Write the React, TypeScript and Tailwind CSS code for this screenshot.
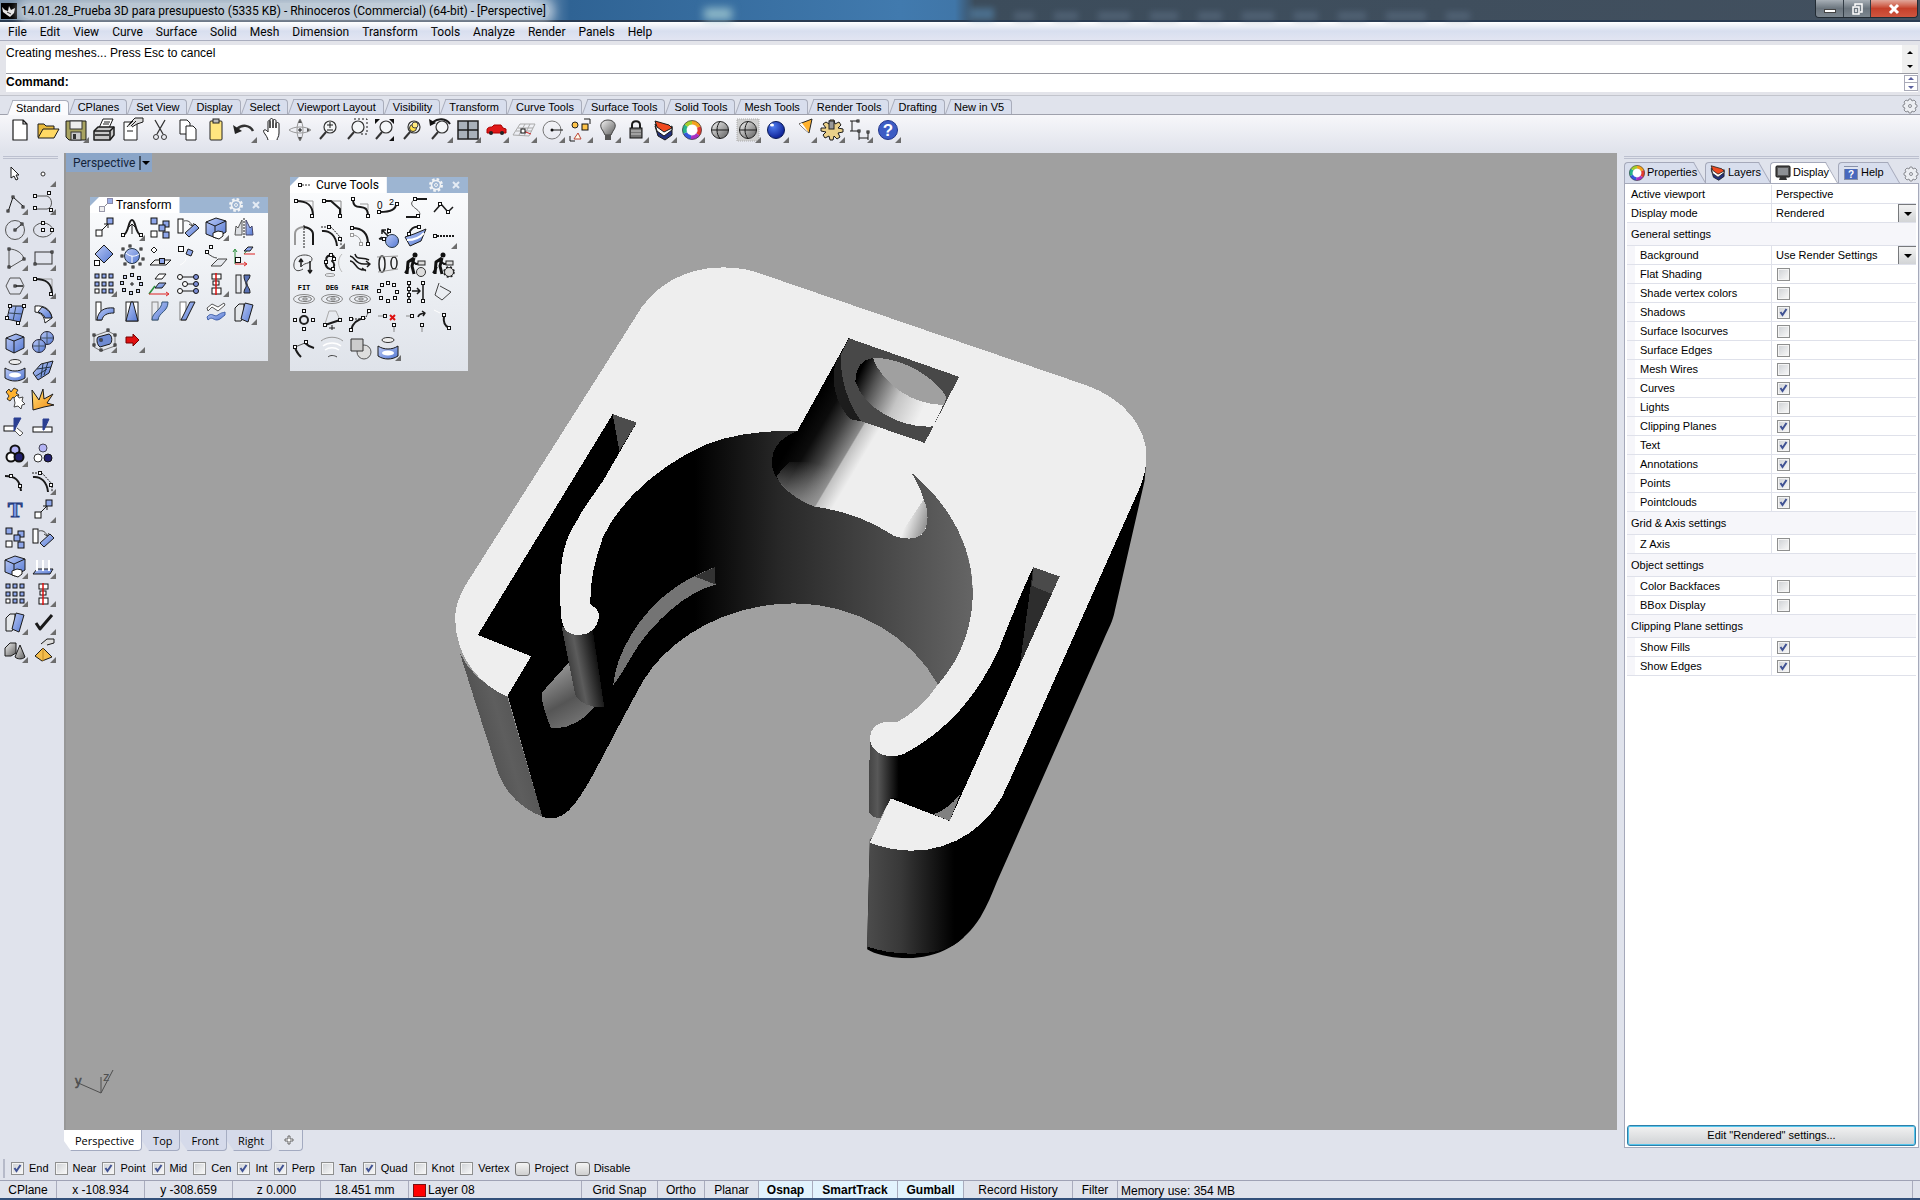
import type { ReactNode } from 'react';
import clsx from 'clsx';

/* ---------- small drawing helpers, all on a 28x28 cell ---------- */

type LineProps = { d: string; c?: string; w?: number; f?: string; dash?: string };

function Ln({ d, c = '#1a1a1a', w = 1, f = 'none', dash }: LineProps) {
  return <path d={d} stroke={c} strokeWidth={w} fill={f} strokeDasharray={dash} strokeLinejoin="round" />;
}

// square handles, "x,y x,y ..."
function Pts({ p, s = 3, f = '#fff', c = '#111' }: { p: string; s?: number; f?: string; c?: string }) {
  return (
    <>
      {p.split(' ').map((xy) => {
        const [x, y] = xy.split(',').map(Number);
        return <rect key={xy} x={x - s / 2} y={y - s / 2} width={s} height={s} fill={f} stroke={c} />;
      })}
    </>
  );
}

const BLUE = 'url(#blue)';

const spiral = (
  <>
    <ellipse cx="14" cy="21" rx="10.500" ry="4.500" fill="none" stroke="#888" />
    <ellipse cx="15" cy="21" rx="6.500" ry="2.500" fill="none" stroke="#777" />
    <ellipse cx="15" cy="21" rx="2.500" ry="1" fill="none" stroke="#777" />
  </>
);

const word = (t: string) => (
  <>
    <text x="14" y="12" textAnchor="middle" fontSize="7" fontWeight="700" fontFamily="Liberation Mono, monospace">{t}</text>
    {spiral}
  </>
);

const magnifier = (
  <>
    <circle cx="16" cy="11" r="6" fill="#f4f6f8" stroke="#333" strokeWidth="1.200" />
    <Ln d="M12 16 L6 23" c="#333" w={2} />
  </>
);

const gridSquares = (
  <>
    <Pts p="7,6 14,6 21,6 7,14 14,14 21,14 14,21 21,21" s={4} f="#8ea6ea" />
    <Pts p="7,21" s={4} />
  </>
);

const cyclist = (
  <>
    <circle cx="13" cy="5" r="2.500" fill="#111" />
    <Ln d="M12 8 L6 12 L5 24 M12 8 L10 16 L12 24" w={3} c="#111" />
    <Ln d="M9 10 L14 14 L20 13 M7 17 L3 23" w={2} c="#111" />
    <rect x="16" y="11" width="7" height="4" fill="#ddd" stroke="#222" />
    <circle cx="19" cy="22" r="4.500" fill="#ddd" stroke="#333" />
  </>
);

const globe = (
  <>
    <circle cx="14" cy="14" r="8.500" fill="url(#metal)" stroke="#222" />
    <Ln d="M5.500 14 H22.500 M14 5.500 C10 10 10 18 14 22.500" />
  </>
);

const icons: Record<string, ReactNode> = {
  /* standard bar */
  new: <Ln d="M7 4 H17 L21 8 V24 H7 Z M17 4 V8 H21" f="#fff" w={1.2} />,
  open: (
    <>
      <Ln d="M4 21 V8 H10 L12 10 H20 V13" f="#e8b93c" />
      <Ln d="M4 22 L9 13 H25 L20 22 Z" f="#ffd964" />
    </>
  ),
  save: (
    <>
      <Ln d="M4 5 H24 V24 H7 L4 21 Z" f="#a8a361" />
      <rect x="8" y="5" width="12" height="8" fill="#eee" stroke="#333" />
      <rect x="9" y="16" width="10" height="8" fill="#ccc" stroke="#333" />
      <rect x="11" y="18" width="3" height="5" fill="#333" />
    </>
  ),
  print: (
    <>
      <Ln d="M9 12 L13 3 H23 L19 12 Z" f="#fff" />
      <Ln d="M14 6 H20 M13 8 H19" />
      <Ln d="M4 15 L8 11 H24 V19 L20 24 H4 Z" f="#c6c6c6" w={1.5} />
      <Ln d="M4 15 H20 V24 M20 15 L24 11 M5 19 H19" w={1.5} />
    </>
  ),
  props: (
    <>
      <Ln d="M6 6 H19 V24 H6 Z" f="#fff" />
      <Ln d="M9 11 L13 6 L17 2 H25 V6 L19 8 L14 11" f="#ddd" />
      <Ln d="M11 9 L15 5 M13 10 L18 5 M9 15 H15" />
    </>
  ),
  cut: (
    <>
      <Ln d="M9 4 L17 18 M19 4 L11 18" c="#333" w={1.3} />
      <circle cx="10" cy="21" r="2.500" fill="none" stroke="#333" />
      <circle cx="18" cy="21" r="2.500" fill="none" stroke="#333" />
    </>
  ),
  copyDoc: (
    <>
      <Ln d="M6 4 H13 L16 7 V18 H6 Z" f="#fff" />
      <Ln d="M12 10 H19 L22 13 V24 H12 Z" f="#fff" />
    </>
  ),
  paste: (
    <>
      <rect x="8" y="5" width="12" height="19" rx="1" fill="#ffe680" stroke="#222" />
      <rect x="11" y="3" width="6" height="4" fill="#bbb" stroke="#222" />
    </>
  ),
  undo: (
    <>
      <Ln d="M7 13 C12 8 20 9 23 15" w={2.5} c="#333" />
      <path d="M3 9 L5 18 L12 15 Z" fill="#222" />
    </>
  ),
  hand: (
    <Ln
      d="M10 24 C9 19 4 16 6 14 C8 13 10 16 10 16 V6 C10 4 12 4 12 6 V12 V4 C12 2 15 2 15 4 V12 V5 C15 3 18 3 18 5 V12 V8 C18 6 21 6 21 8 V17 C21 21 19 22 19 24"
      f="#fff"
    />
  ),
  rotateView: (
    <>
      <Ln d="M14 3 C10 8 10 20 14 25 C18 20 18 8 14 3 M3 14 C8 10 20 10 25 14 C20 18 8 18 3 14" c="#999" />
      <path d="M14 3 l2 4 h-4 Z M14 25 l2 -4 h-4 Z M24 14 l-3 2 v-4 Z" fill="#555" />
      <Ln d="M14 12 V16 M12 14 H16" />
    </>
  ),
  zoomPM: <>{magnifier}<Ln d="M13 9 H19 M16 6 V12 M13 14 H19" /></>,
  zoomWin: <>{magnifier}<Ln d="M12 3 H25 V18 H18" dash="2 2" /></>,
  zoomExt: <>{magnifier}<path d="M5 3 h5 l-5 5 Z M24 3 v5 l-5 -5 Z M24 25 v-5 l-5 5 Z" fill="#111" /></>,
  zoomSel: (
    <>
      {magnifier}
      <circle cx="15" cy="12" r="3.500" fill="#ffe14a" stroke="#333" />
      <circle cx="17" cy="9" r="3" fill="#ffeb80" stroke="#444" />
    </>
  ),
  zoomUndo: <>{magnifier}<Ln d="M7 6 C12 2 20 2 24 8" w={2} /><path d="M3 3 l1 7 l6 -3 Z" fill="#111" /></>,
  fourView: (
    <>
      <rect x="4" y="5" width="20" height="18" fill="#a9b1ba" stroke="#222" strokeWidth="1.500" />
      <Ln d="M14 5 V23 M4 14 H24" w={1.5} />
    </>
  ),
  car: (
    <>
      <Ln d="M5 14 C5 11 9 11 10 11 L12 9 H19 L21 12 L24 13 V17 H5 Z" c="#a00" f="#e01818" />
      <circle cx="9" cy="17" r="2" fill="#222" />
      <circle cx="20" cy="17" r="2" fill="#222" />
    </>
  ),
  cplane: (
    <>
      <Ln d="M3 19 L10 8 H25 L19 20 Z M6 15 H22 M8 12 H23 M9 19 L15 8 M14 20 L20 8" c="#aaa" />
      <Ln d="M13 15 L21 18" c="#c22" />
      <Pts p="13,15" s={4} />
    </>
  ),
  setObj: (
    <>
      <circle cx="14" cy="14" r="9" fill="none" stroke="#777" />
      <Ln d="M14 14 H25" />
      <circle cx="14" cy="14" r="1.500" fill="#111" />
    </>
  ),
  select: (
    <>
      <Ln d="M18 3 H24 V8 M4 20 V25 H9" />
      <circle cx="9" cy="9" r="3" fill="#ffc44a" stroke="#222" />
      <Pts p="19,11" s={6} f="#ffc44a" />
      <Ln d="M12 17 L15 23 H8 Z" c="#b43" f="#ffe" />
    </>
  ),
  lamp: (
    <>
      <path d="M9 15 C4 9 8 4 14 4 C20 4 24 9 19 15 L17 19 H11 Z" fill="url(#metal)" stroke="#444" />
      <rect x="11" y="19" width="6" height="5" fill="#555" />
    </>
  ),
  lock: (
    <>
      <Ln d="M10 13 V9 C10 4 18 4 18 9 V13" w={2} />
      <rect x="8" y="12" width="12" height="10" fill="#777" stroke="#111" />
      <Ln d="M9 15 H19 M9 18 H19" c="#ccc" />
    </>
  ),
  layers: (
    <>
      <Ln d="M5 10 L14 16 L22 11 V19 L15 24 L8 20 Z" f="#24327e" />
      <Ln d="M5 8 L14 14 L22 10 V14 L14 20 L7 15 Z" f="#fff" />
      <Ln d="M5 5 L19 9 L22 12 L14 16 L7 11 Z" f="#f04a20" />
    </>
  ),
  wheel: <Wheel />,
  globe,
  globe2: (
    <>
      <rect x="3" y="3" width="22" height="22" fill="#cfcfcf" stroke="#aaa" strokeDasharray="1 1" />
      {globe}
    </>
  ),
  ball: (
    <>
      <circle cx="14" cy="14" r="8.500" fill="url(#ball)" stroke="#0a1a55" />
      <ellipse cx="10" cy="9" rx="2" ry="1.500" fill="#fff" />
    </>
  ),
  spot: <><path d="M9 8 L22 3 L19 17 Z" fill="#ffb22e" stroke="#222" /><path d="M9 8 L12 7 L19 17 Z" fill="#fff" /></>,
  gear: (
    <>
      <Ln d="M12 4 H16 L17 8 L21 6 L23 9 L20 12 L25 13 V16 L20 17 L22 21 L19 23 L16 20 L15 24 H12 L11 20 L7 22 L5 19 L8 16 L3 15 V12 L8 12 L5 8 L8 6 L11 8 Z" f="#ead089" />
      <rect x="11" y="5" width="5" height="8" fill="#999" stroke="#222" />
    </>
  ),
  dims: (
    <>
      <Ln d="M6 5 V15 M4 5 H11 M4 15 H13 M13 15 V24 M22 15 V24 M13 22 H22" />
      <Pts p="12,5 13,15 22,16" s={2} />
    </>
  ),
  help: (
    <>
      <circle cx="14" cy="14" r="9.500" fill="#3d5cc4" stroke="#23368c" />
      <text x="14" y="20" textAnchor="middle" fontSize="17" fontWeight="700" fill="#fff" fontFamily="Liberation Sans, sans-serif">?</text>
    </>
  ),

  /* modelling tools */
  pointer: <Ln d="M10 7 V18 L13 16 L15 20 L17 19 L15 15 H18 Z" f="#fff" />,
  point: <circle cx="14" cy="14" r="2" fill="#fff" stroke="#333" />,
  polyline: <><Ln d="M7 24 L12 9 L23 19" /><Pts p="7,23 12,9 22,19" s={2} /></>,
  curvePts: <><Ln d="M6 8 H18 C24 10 24 20 18 21 H6" c="#555" /><Pts p="6,8 20,5 6,20 22,22" /></>,
  circle: <><circle cx="14" cy="14" r="9.500" fill="none" stroke="#555" /><Ln d="M14 14 L21 8" /><Pts p="14,14 21,8" s={2} /></>,
  ellipse: <><ellipse cx="14" cy="14" rx="9.500" ry="7" fill="none" stroke="#555" /><Pts p="14,7 14,14 23,14" /></>,
  arc: <><Ln d="M8 5 C16 5 22 10 23 15 L8 24 Z" c="#555" /><Pts p="8,5 23,15 8,23" s={2} /></>,
  rect: <><rect x="6" y="8" width="17" height="12" fill="none" stroke="#333" /><Pts p="6,20 23,8" s={2} /></>,
  polygon: <><Ln d="M9 6 H19 L23 14 L19 22 H9 L5 14 Z" c="#555" /><Ln d="M14 14 H22" w={1.5} /><Pts p="14,14" s={2} /></>,
  fillet: <><Ln d="M6 7 H23 V22" c="#999" /><Ln d="M6 7 C16 7 23 10 23 22" w={2} /><Pts p="6,7 22,22" /></>,
  surface: <><Ln d="M9 6 L23 6 L19 22 L6 19 Z" f={BLUE} /><Ln d="M15 6 L12 21 M8 13 L21 14" c="#345" /><Pts p="9,6 23,6 6,18 17,23" /></>,
  sweep: <><Ln d="M6 6 C16 5 22 10 23 18 L16 23 C15 15 12 13 6 12 Z" f="#fff" /><Ln d="M13 7 C19 9 22 13 23 18 L16 18 C15 15 13 13 9 12 Z" f={BLUE} /></>,
  cube: <><Ln d="M5 10 L15 6 L23 9 V20 L13 25 L5 21 Z" f={BLUE} /><Ln d="M5 10 L13 13 L23 9 M13 13 V25" /></>,
  spheres: (
    <>
      <circle cx="18" cy="10" r="6.500" fill={BLUE} stroke="#223" />
      <circle cx="10" cy="18" r="6.500" fill={BLUE} stroke="#223" />
      <Ln d="M4 18 H16 M10 12 V24 M12 10 H24 M18 4 V16" c="#456" />
    </>
  ),
  project: (
    <>
      <ellipse cx="14" cy="6" rx="6" ry="2.500" fill="#eee" stroke="#333" />
      <Ln d="M4 12 C10 16 18 16 24 12 V22 C18 26 10 26 4 22 Z" f={BLUE} />
      <ellipse cx="14" cy="19" rx="6" ry="2.500" fill="#fff" />
    </>
  ),
  patch: <><Ln d="M4 17 L12 8 L24 5 L20 17 L9 24 Z" f={BLUE} /><Ln d="M8 13 L22 11 M7 20 L18 13 M14 8 L12 21 M19 6 L15 19" c="#234" /></>,
  puzzle: (
    <>
      <Ln d="M5 8 L8 5 L10 8 L13 4 L17 6 L15 9 L18 11 L15 15 L12 13 L9 17 L6 15 L8 12 Z" c="#333" f="#ffb22e" />
      <Ln d="M13 14 L16 11 L18 14 L22 13 L21 17 L24 20 L21 21 L20 25 L17 22 L13 23 L14 19 Z" f="#fff" c="#444" />
    </>
  ),
  explode: <Ln d="M3 6 L10 16 L14 5 L15 15 L24 10 L18 19 L25 21 L15 23 L4 26 Z" f="url(#fire)" />,
  trim: <><rect x="3" y="14" width="11" height="5" fill="#fff" stroke="#111" /><Ln d="M13 6 H20 L15 15 L13 19 Z" f="#2b3f92" c="#2b3f92" /><Ln d="M16 16 L22 21 L19 24 L14 19" f="#fff" c="#555" /></>,
  split: <><rect x="4" y="15" width="19" height="5" fill="#fff" stroke="#111" /><Ln d="M14 7 H20 L15 18 L14 18 Z" f="#2b3f92" c="#2b3f92" /></>,
  group: (
    <>
      <circle cx="14" cy="10" r="4.500" fill="#b3b3f5" stroke="#111" strokeWidth="2" />
      <circle cx="10" cy="17" r="4.500" fill="#fff" stroke="#111" strokeWidth="2" />
      <circle cx="18" cy="17" r="4.500" fill="#222070" stroke="#111" strokeWidth="2" />
    </>
  ),
  ungroup: (
    <>
      <circle cx="14" cy="8" r="4" fill="#b3b3f5" stroke="#445" />
      <circle cx="9" cy="18" r="4" fill="#fff" stroke="#333" />
      <circle cx="19" cy="18" r="4" fill="#222070" stroke="#111" />
    </>
  ),
  editPts: <><Ln d="M4 8 C14 8 19 12 20 23" w={2} /><Pts p="10,8 19,18" /></>,
  offPts: <><Ln d="M3 5 H13 L23 16 V24" dash="2 1" /><Ln d="M4 9 C12 8 18 14 19 24" w={2} /><Pts p="11,5 22,17" /></>,
  text: <text x="14" y="21" textAnchor="middle" fontSize="22" fontWeight="700" fill="#7d9ae8" stroke="#223a7c" fontFamily="Liberation Serif, serif">T</text>,
  move: <><Ln d="M12 16 L18 10 M14 10 H18 V14" /><Pts p="9,19" s={6} /><Pts p="20,7" s={6} f="#8ea6ea" /></>,
  copy: <><Pts p="8,7 20,10 16,14 20,21" s={6} f="#8ea6ea" /><Pts p="8,20" s={6} /></>,
  rotate: <><rect x="4" y="5" width="5" height="14" fill="#fff" stroke="#111" /><Ln d="M10 7 C14 6 17 8 18 12 M15 10 L18 12 L20 9" c="#444" /><Ln d="M11 19 L21 10 L25 14 L15 23 Z" f={BLUE} /></>,
  scale: <><Ln d="M4 8 L14 4 L24 7 V18 L14 24 L4 20 Z" f={BLUE} /><Ln d="M4 8 L13 12 L24 7 M13 12 V24" /><Ln d="M11 19 L16 17 L21 18 V22 L17 25 L11 23 Z" f="#fff" /></>,
  projectUp: <><Ln d="M4 22 L8 17 H24 L21 22 Z" f={BLUE} /><Ln d="M8 19 V8 M14 19 V8 M20 19 V8" c="#fff" w={2} /></>,
  array: gridSquares,
  align: <><rect x="10" y="4" width="9" height="5" fill="#fff" stroke="#111" /><rect x="11" y="11" width="6" height="4" fill="#fff" stroke="#111" /><rect x="10" y="18" width="9" height="6" fill="#fff" stroke="#111" /><Ln d="M14 3 V25" c="#d11" w={1.5} /></>,
  blocks: <><Ln d="M5 10 L9 6 H14 V18 L11 23 H5 Z" f="#e4e7ea" /><Ln d="M15 5 L23 7 L18 24 L11 21 Z" f={BLUE} /></>,
  check: <Ln d="M7 15 L11 21 L23 7" w={3} />,
  solids: <><Ln d="M4 12 L9 7 H15 V17 L10 20 H4 Z" f="url(#metal)" /><Ln d="M19 9 L24 21 C21 24 16 23 14 21 Z" f="url(#metal)" /></>,
  pyramid: <><Ln d="M14 12 L23 21 L13 25 L6 20 Z" f="#f4bd4c" /><Ln d="M14 12 V25" c="#c48a22" /><Ln d="M12 8 L18 3 H25 V7 L18 9" f="#ddd" /></>,

  /* transform */
  bell: <><Ln d="M5 21 C11 20 10 6 14 6 C18 6 17 20 23 21" w={2} /><Ln d="M14 20 V10 M11 13 L14 10 L17 13" /><Pts p="5,21 23,21" /></>,
  mirror: <><Ln d="M12 6 L8 14 L6 12 L5 21 H12 Z" f="#dde0e4" c="#555" /><Ln d="M16 6 L20 14 L22 12 L23 21 H16 Z" f={BLUE} c="#446" /><Ln d="M14 4 V25" dash="2 1" /></>,
  diamond: <><Ln d="M14 3 L23 12 L14 21 L5 12 Z" f={BLUE} /><Pts p="7,21" s={5} /></>,
  ballPts: <><circle cx="14" cy="14" r="7.500" fill={BLUE} stroke="#234" /><Ln d="M8 11 C12 15 17 15 21 12 M14 14 V21" c="#fff" /><Pts p="5,7 12,4 23,7 4,14 25,17 7,22 15,25 22,22" s={2} /></>,
  onPlane: <><Ln d="M4 23 L9 18 H25 L20 23 Z" f="#eee" /><Ln d="M8 5 L11 8 L8 11 L5 8 Z" f="#fff" /><Pts p="16,19" s={5} f="#8ea6ea" /></>,
  twoPts: <><Pts p="7,7" s={5} /><Ln d="M14 7 L19 9 L17 14 L12 12 Z" f="#8ea6ea" /><Ln d="M12 16 C12 20 8 22 6 23" c="#fff" /></>,
  flow: <><Ln d="M5 11 C9 14 12 16 15 16 M9 24 L16 17 H25 L19 24 Z" f="#e6e9ee" c="#444" /><Pts p="5,10 9,5" /></>,
  axes: <><Ln d="M5 22 V8 M3 10 L5 7 L7 10 M14 12 L20 5" c="#2a8f3a" /><Ln d="M5 22 H16 M14 20 L17 22 L14 24 M14 12 H25" c="#d22" /><Pts p="8,18" s={5} /><Ln d="M14 9 L18 5 H23 L20 9 Z" f="#8ea6ea" /></>,
  polar: <><Pts p="14,5 21,8 23,14 20,21 13,23 6,20 4,13 7,7" f="#c8d2ee" /><Ln d="M12 14 H16 M14 12 V16" /></>,
  planeAxes: <><Ln d="M9 9 L13 4 H20 L16 9 Z" f="#fff" /><Ln d="M9 18 L13 13 H20 L16 18 Z" f={BLUE} /><Ln d="M3 24 L9 16" c="#2a8f3a" w={1.5} /><Ln d="M3 24 H22 M20 22 L23 24 L20 26" c="#d22" /></>,
  chain: <><Ln d="M7 7 H21 M11 14 H21 M7 21 H21" /><g stroke="#111"><circle cx="6" cy="7" r="2.500" fill="#fff" /><circle cx="11" cy="14" r="2.500" fill="#fff" /><circle cx="6" cy="21" r="2.500" fill="#fff" /><circle cx="22" cy="7" r="2.500" fill="#7d8fd8" /><circle cx="22" cy="14" r="2.500" fill="#7d8fd8" /><circle cx="22" cy="21" r="2.500" fill="#7d8fd8" /></g></>,
  twist: <><rect x="6" y="5" width="5" height="18" fill="#e8eaee" stroke="#222" /><Ln d="M14 5 H20 C20 10 16 10 17 14 C18 18 20 18 20 23 H14 C14 18 17 18 16 14 C15 10 14 10 14 5" f="#5a72b5" /></>,
  bend: <><rect x="6" y="4" width="5" height="18" fill="#fff" stroke="#222" /><Ln d="M7 22 C8 13 14 9 24 10 V15 C17 15 13 17 12 22 Z" f={BLUE} /></>,
  taper: <><rect x="8" y="4" width="12" height="19" fill="#fff" stroke="#222" /><Ln d="M13 4 H15 L20 23 H8 Z" f={BLUE} /></>,
  shear: <><rect x="6" y="4" width="6" height="18" fill="#e8eaee" stroke="#888" /><Ln d="M6 22 C6 14 16 12 16 4 H22 C22 14 13 14 12 22 Z" f={BLUE} c="#357" /></>,
  slant: <><rect x="6" y="4" width="6" height="18" fill="#fff" stroke="#777" /><Ln d="M7 22 L16 4 H21 L12 22 Z" f={BLUE} /></>,
  waves: <><Ln d="M5 10 L10 6 L16 9 L22 5 L23 7 L16 13 L10 9 L6 13 Z" f="#fff" c="#555" /><Ln d="M5 19 C10 13 12 20 16 17 C20 14 21 15 23 14 V17 C20 19 18 22 15 22 C11 22 10 18 6 22 Z" f={BLUE} c="#4060a8" /></>,
  cage: <><Ln d="M4 10 L18 5 L25 9 V20 L11 25 L4 21 Z" c="#777" /><Ln d="M8 11 L19 8 C23 10 22 17 20 18 L10 21 C7 19 6 13 8 11" f="#6f8bd2" /><Pts p="4,9 18,4 25,9 25,19 11,24 4,19 11,14" s={2} /></>,
  arrow: <Ln d="M8 11 H15 V8 L21 14 L15 20 V17 H8 Z" c="#700" f="#e01010" />,

  /* curve tools */
  chamfer: <><Ln d="M6 7 H23 V22" c="#888" /><Ln d="M6 7 H13 L22 15 V22" w={2} /><Pts p="6,7 22,22" /></>,
  blend: <><Ln d="M7 5 C7 20 22 6 22 22" w={2} /><Ln d="M14 10 H22 V16" c="#999" /><Pts p="7,5 22,22" /></>,
  degree: <><Ln d="M6 18 C12 18 22 17 22 10" w={2} /><text x="3" y="15" fontSize="10" fontFamily="Liberation Sans, sans-serif">0</text><text x="15" y="11" fontSize="9" fontFamily="Liberation Sans, sans-serif">2</text><Pts p="5,18 23,10" /></>,
  sCurve: <><Ln d="M13 5 H25 M4 23 H17" w={2} /><Ln d="M13 5 C2 13 22 15 17 22" c="#555" /><Pts p="13,5 16,22" /></>,
  zig: <><Ln d="M4 18 L11 10 L18 18 L23 13" w={1.5} /><Pts p="10,10 18,18" /></>,
  symmetry: <><Ln d="M5 23 V12 C5 5 14 5 14 5 " c="#999" w={2} /><Ln d="M14 5 C23 6 23 12 23 12 V23" w={2} /><Ln d="M14 3 V26" dash="2 1" /></>,
  offset: <><Ln d="M6 6 C17 6 22 11 22 22" w={2} /><Ln d="M6 13 C12 13 15 17 15 22" c="#999" /><Pts p="6,6 22,22" /><Pts p="6,13 15,22" c="#999" /></>,
  pull: <><Ln d="M5 17 H12 M5 17 L8 15 M14 14 L8 8 V12 M8 8 H12 M14 12 V6" w={1.5} /><circle cx="18" cy="19" r="6.500" fill={BLUE} stroke="#234" /><Pts p="10,17 15,9" /></>,
  onSrf: <><Ln d="M3 15 L12 12 L24 7 L19 19 L8 24 Z" f={BLUE} /><Ln d="M7 12 C8 7 12 4 17 5" w={2} /><Ln d="M5 18 C11 18 17 17 22 11" c="#fff" w={2} /><Pts p="7,12 17,5" /></>,
  dotted: <><Ln d="M7 14 H24" dash="2 1" w={2} /><Pts p="5,14" /></>,
  lasso: <><Ln d="M13 19 C5 24 2 17 5 10 C8 3 22 4 22 9 C22 14 15 12 12 16" c="#444" /><Ln d="M11 17 V9 M9 12 L11 9 L13 12 M20 11 V23 M18 20 L20 23 L22 20" w={1.5} /></>,
  chainCrv: <><Ln d="M13 5 C7 6 8 10 9 12 C6 14 9 20 14 19 M13 5 C17 6 17 9 14 11 C17 13 17 17 14 19" w={2} /><Ln d="M24 4 C19 9 20 17 24 22" c="#bbb" /><Pts p="13,5 16,9 8,12 15,19" /><ellipse cx="12" cy="25" rx="5" ry="1.500" fill="none" stroke="#999" /></>,
  arrows: <Ln d="M4 6 C10 7 8 14 18 14 L24 14 M20 11 L24 14 L21 17 M4 11 C10 11 9 21 20 20 M16 18 L20 21 M9 4 C11 11 16 6 23 10" w={1.5} />,
  tube: <><ellipse cx="8" cy="14" rx="3" ry="8" fill="none" stroke="#222" strokeWidth="1.500" /><ellipse cx="20" cy="13" rx="3" ry="6" fill="none" stroke="#222" strokeWidth="1.500" /><Ln d="M3 7 L24 6 M4 22 L24 19" c="#999" /></>,
  bike: cyclist,
  bikeGear: <>{cyclist}<circle cx="19" cy="22" r="5" fill="none" stroke="#222" strokeWidth="1.500" strokeDasharray="2 2" /></>,
  fit: word('FIT'),
  deg: word('DEG'),
  fair: word('FAIR'),
  ring: <Pts p="14,5 20,7 23,14 21,20 14,23 7,20 5,13 8,7" />,
  match: <><Ln d="M7 5 V24 M21 5 V24 M10 13 H18 M15 10 L18 13 L15 16" w={1.5} /><Pts p="7,5 7,11 7,17 7,23 21,5 21,23" /></>,
  poly: <Ln d="M9 5 L5 17 L12 22 L21 14 L10 8" c="#444" />,
  sun: <><circle cx="14" cy="14" r="4" fill="none" stroke="#222" strokeWidth="2" /><Pts p="14,5 23,14 14,23 5,14" /></>,
  trapez: <><Ln d="M7 18 L11 5 H18 L22 14" c="#aaa" /><Ln d="M7 19 L22 14" w={2} /><Ln d="M14 19 V24 M11 22 H17" /><Pts p="7,19 22,14" /></>,
  join: <><Ln d="M5 24 C7 16 12 13 19 12" w={2} /><Ln d="M6 13 H19 L23 5" dash="2 1" /><Pts p="5,13 5,24 17,12 23,5" /></>,
  remove: <><Ln d="M4 10 H10 M20 19 V26" c="#888" /><Pts p="11,10 20,19" /><Ln d="M16 9 L21 14 M21 9 L16 14" c="#d11" w={2} /></>,
  insert: <><Ln d="M4 10 H10 M20 19 V26" c="#888" /><Ln d="M16 11 C17 7 20 8 23 7 M20 5 L23 7 L21 10" w={1.5} /><Pts p="10,10 20,19" /></>,
  vert: <><Ln d="M14 10 C13 16 15 20 19 22" w={2} /><Pts p="14,9 19,22" /><Ln d="M4 4 L10 7" c="#fff" /></>,
  arcTan: <><Ln d="M5 13 C6 18 8 20 11 23 M15 9 C18 12 20 13 24 14" w={2} /><Ln d="M5 13 L15 9" c="#555" /><Pts p="5,13 16,8" /></>,
  signal: <><Ln d="M3 7 C9 2 19 2 25 7" c="#999" /><Ln d="M5 12 C10 8 18 8 23 12 M7 16 C11 13 17 13 21 16" c="#fff" w={1.5} /><Ln d="M10 23 C12 21 16 21 19 23" c="#444" /></>,
  union: <><circle cx="18" cy="18" r="7" fill="#ddd" stroke="#555" /><Ln d="M5 5 H17 V17 H5 Z" f="#ccc" c="#333" /></>,
};

function Wheel() {
  return (
    <g fill="none" strokeWidth="4">
      <circle cx="14" cy="14" r="5" fill="#fff" />
      <path d="M14 6.500 A7.500 7.500 0 0 1 21 11" stroke="#f5a21c" />
      <path d="M21 11 A7.500 7.500 0 0 1 20 18.500" stroke="#e33b30" />
      <path d="M20 18.500 A7.500 7.500 0 0 1 13 21.400" stroke="#a82fc2" />
      <path d="M13 21.400 A7.500 7.500 0 0 1 7 17" stroke="#3558dd" />
      <path d="M7 17 A7.500 7.500 0 0 1 8 9.500" stroke="#25b58a" />
      <path d="M8 9.500 A7.500 7.500 0 0 1 14 6.500" stroke="#a5cf2c" />
      <circle cx="14" cy="14" r="9.500" stroke="#333" strokeWidth="0.700" />
    </g>
  );
}

function Tool({ name }: { name: string }) {
  // a trailing "+" marks a button with a fly-out
  const flyout = name.endsWith('+');
  const key = flyout ? name.slice(0, -1) : name;
  return (
    <button type="button" aria-label={key} className="size-7 shrink-0">
      <svg viewBox="0 0 28 28" className="size-7 overflow-visible">
        {icons[key]}
        {flyout && <path d="M27 21 V27 H21 Z" fill="#6d6d6d" />}
      </svg>
    </button>
  );
}

function GearIcon({ className }: { className: string }) {
  return (
    <svg viewBox="0 0 16 16" className={className} fill="none" stroke="currentColor">
      <circle cx="8" cy="8" r="5.500" strokeWidth="3" strokeDasharray="2.400 1.900" />
      <circle cx="8" cy="8" r="4.500" strokeWidth="1.500" />
      <circle cx="8" cy="8" r="1.500" />
    </svg>
  );
}

// thin outlined cog used at the end of tab rows
function CogOutline({ className }: { className: string }) {
  return (
    <svg viewBox="0 0 16 16" className={className} fill="#eceef2" stroke="currentColor">
      <path d="M7 1 H9 L10 3 L12 2 L14 4 L13 6 L15 7 V9 L13 10 L14 12 L12 14 L10 13 L9 15 H7 L6 13 L4 14 L2 12 L3 10 L1 9 V7 L3 6 L2 4 L4 2 L6 3 Z" />
      <circle cx="8" cy="8" r="1.500" />
    </svg>
  );
}

/* ---------- data ---------- */

const menus = ['File', 'Edit', 'View', 'Curve', 'Surface', 'Solid', 'Mesh', 'Dimension', 'Transform', 'Tools', 'Analyze', 'Render', 'Panels', 'Help'];

const toolTabs = [
  'Standard', 'CPlanes', 'Set View', 'Display', 'Select', 'Viewport Layout', 'Visibility', 'Transform',
  'Curve Tools', 'Surface Tools', 'Solid Tools', 'Mesh Tools', 'Render Tools', 'Drafting', 'New in V5',
];

const standardTools = [
  'new', 'open', 'save+', 'print', 'props', 'cut', 'copyDoc', 'paste', 'undo+', 'hand', 'rotateView', 'zoomPM', 'zoomWin',
  'zoomExt', 'zoomSel', 'zoomUndo+', 'fourView+', 'car+', 'cplane+', 'setObj+', 'select+', 'lamp+', 'lock+', 'layers+',
  'wheel+', 'globe', 'globe2+', 'ball+', 'spot+', 'gear+', 'dims+', 'help+',
];

const sideTools = [
  'pointer', 'point+', 'polyline+', 'curvePts+', 'circle+', 'ellipse+', 'arc+', 'rect+', 'polygon+', 'fillet+',
  'surface+', 'sweep+', 'cube+', 'spheres+', 'project+', 'patch+', 'puzzle', 'explode', 'trim', 'split',
  'group+', 'ungroup', 'editPts', 'offPts+', 'text', 'move+', 'copy', 'rotate', 'scale+', 'projectUp+',
  'array+', 'align+', 'blocks+', 'check+', 'solids+', 'pyramid+',
];

const transformTools = [
  'move', 'bell+', 'copy', 'rotate', 'scale+', 'mirror', 'diamond', 'ballPts', 'onPlane', 'twoPts', 'flow', 'axes',
  'array+', 'polar', 'planeAxes', 'chain', 'align+', 'twist', 'bend', 'taper', 'shear', 'slant', 'waves', 'blocks+',
  'cage+', 'arrow+',
];

const curveTools = [
  'fillet', 'chamfer', 'blend', 'degree', 'sCurve', 'zig', 'symmetry', 'offPts+', 'offset', 'pull', 'onSrf', 'dotted+',
  'lasso', 'chainCrv', 'arrows', 'tube', 'bike', 'bikeGear', 'fit', 'deg', 'fair', 'ring', 'match', 'poly',
  'sun', 'trapez', 'join', 'remove', 'insert', 'vert', 'arcTan', 'signal', 'union', 'project+',
];

const settings: { title: string; rows: [string, boolean | string][] }[] = [
  {
    title: 'General settings',
    rows: [
      ['Background', 'Use Render Settings'],
      ['Flat Shading', false],
      ['Shade vertex colors', false],
      ['Shadows', true],
      ['Surface Isocurves', false],
      ['Surface Edges', false],
      ['Mesh Wires', false],
      ['Curves', true],
      ['Lights', false],
      ['Clipping Planes', true],
      ['Text', true],
      ['Annotations', true],
      ['Points', true],
      ['Pointclouds', true],
    ],
  },
  { title: 'Grid & Axis settings', rows: [['Z Axis', false]] },
  { title: 'Object settings', rows: [['Color Backfaces', false], ['BBox Display', false]] },
  { title: 'Clipping Plane settings', rows: [['Show Fills', true], ['Show Edges', true]] },
];

const osnaps: [string, boolean][] = [
  ['End', true], ['Near', false], ['Point', true], ['Mid', true], ['Cen', false], ['Int', true],
  ['Perp', true], ['Tan', false], ['Quad', true], ['Knot', false], ['Vertex', false],
];

const statusCells: { text: string; w: string; on?: boolean; swatch?: boolean }[] = [
  { text: 'CPlane', w: 'w-[57px]' },
  { text: 'x -108.934', w: 'w-[88px]' },
  { text: 'y -308.659', w: 'w-[88px]' },
  { text: 'z 0.000', w: 'w-[88px]' },
  { text: '18.451 mm', w: 'w-[88px]' },
  { text: 'Layer 08', w: 'w-[173px]', swatch: true },
  { text: 'Grid Snap', w: 'w-[76px]' },
  { text: 'Ortho', w: 'w-[47px]' },
  { text: 'Planar', w: 'w-[54px]' },
  { text: 'Osnap', w: 'w-[54px]', on: true },
  { text: 'SmartTrack', w: 'w-[85px]', on: true },
  { text: 'Gumball', w: 'w-[66px]', on: true },
  { text: 'Record History', w: 'w-[109px]' },
  { text: 'Filter', w: 'w-[45px]' },
];

/* ---------- controls ---------- */

function Check({ id, checked, label }: { id: string; checked: boolean; label?: string }) {
  return (
    <span className="relative block size-[13px] shrink-0">
      <input
        id={id}
        type="checkbox"
        defaultChecked={checked}
        aria-label={label}
        className="peer block size-[13px] appearance-none border border-[#8e8f8f] bg-gradient-to-br from-[#cdd0d4] to-[#fafafa] shadow-[inset_0_0_0_1px_#f4f4f4]"
      />
      <svg viewBox="0 0 13 13" className="pointer-events-none absolute inset-0 hidden size-[13px] peer-checked:block">
        <path d="M3.500 6 L5.500 9 L9.500 3" fill="none" stroke="#3f5193" strokeWidth="2" />
      </svg>
    </span>
  );
}

function DropDown({ label, value }: { label: string; value: string }) {
  return (
    <div className="relative">
      <select aria-label={label} className="block h-[18px] w-full appearance-none bg-white pl-1 pr-5">
        <option>{value}</option>
      </select>
      <span className="pointer-events-none absolute right-0 top-0 grid h-[18px] w-[18px] place-items-center border-l border-t border-[#77797c] bg-gradient-to-b from-[#f3f3f3] to-[#d2d4d6]">
        <svg viewBox="0 0 8 4" className="h-1 w-2"><path d="M0 0 H8 L4 4 Z" /></svg>
      </span>
    </div>
  );
}

function Palette({ title, tools, icon, className }: { title: string; tools: string[]; icon: ReactNode; className: string }) {
  return (
    <section className={clsx('absolute flex w-[178px] flex-col bg-gradient-to-b from-[#fcfdfe] to-[#dfe3ea]', className)}>
      <header className="flex h-4 items-center bg-[#9db5d2]">
        <h2 className="flex h-4 items-center gap-0.5 bg-white pl-2 pr-2 font-[Roboto,sans-serif] text-xs leading-4 [clip-path:polygon(9px_0,100%_0,100%_100%,0_100%,0_9px)]">
          <svg viewBox="0 0 16 16" className="size-4">{icon}</svg>
          {title}
        </h2>
        <button type="button" aria-label="Options" className="ml-auto"><GearIcon className="size-4 text-[#f1f3f5]" /></button>
        <button type="button" aria-label="Close" className="px-2 text-[#e4ebf4]">
          <svg viewBox="0 0 8 8" className="size-2"><path d="M1 1 L7 7 M7 1 L1 7" stroke="currentColor" strokeWidth="2" /></svg>
        </button>
      </header>
      <div className="grid grid-cols-[repeat(6,28px)] pt-px">
        {tools.map((t) => <Tool key={t} name={t} />)}
      </div>
    </section>
  );
}

/* ---------- the clip model ---------- */

function Model() {
  return (
    <svg viewBox="0 0 1568 1568" shapeRendering="crispEdges" className="absolute left-[374px] top-[87px] size-[740px]">
      <defs>
        <linearGradient id="bore" gradientUnits="userSpaceOnUse" x1="540" y1="0" x2="1129" y2="0">
          <stop offset="0" stopColor="#000" />
          <stop offset="0.300" stopColor="#272727" />
          <stop offset="0.700" stopColor="#4a4a4a" />
          <stop offset="1" stopColor="#656565" />
        </linearGradient>
        <linearGradient id="legL" gradientUnits="userSpaceOnUse" x1="60" y1="1050" x2="200" y2="1010">
          <stop offset="0" stopColor="#4c4c4c" />
          <stop offset="0.500" stopColor="#5e5e5e" />
          <stop offset="1" stopColor="#505050" />
        </linearGradient>
        <linearGradient id="legR" gradientUnits="userSpaceOnUse" x1="905" y1="0" x2="1110" y2="0">
          <stop offset="0" stopColor="#4c4c4c" />
          <stop offset="0.350" stopColor="#383838" />
          <stop offset="0.900" stopColor="#000" />
        </linearGradient>
        <linearGradient id="tipR" gradientUnits="userSpaceOnUse" x1="908" y1="0" x2="972" y2="0">
          <stop offset="0" stopColor="#444" />
          <stop offset="0.300" stopColor="#585858" />
          <stop offset="1" stopColor="#000" />
        </linearGradient>
        <linearGradient id="tipL" gradientUnits="userSpaceOnUse" x1="270" y1="915" x2="345" y2="900">
          <stop offset="0" stopColor="#383838" />
          <stop offset="0.350" stopColor="#5c5c5c" />
          <stop offset="1" stopColor="#000" />
        </linearGradient>
        <linearGradient id="bolt" gradientUnits="userSpaceOnUse" x1="697" y1="508" x2="823" y2="583">
          <stop offset="0" stopColor="#000" />
          <stop offset="0.250" stopColor="#0c0c0c" />
          <stop offset="0.500" stopColor="#404040" />
          <stop offset="0.760" stopColor="#8a8a8a" />
          <stop offset="0.780" stopColor="#c0c0c0" />
          <stop offset="1" stopColor="#eee" />
        </linearGradient>
        <linearGradient id="haze" gradientUnits="userSpaceOnUse" x1="790" y1="470" x2="765" y2="560">
          <stop offset="0" stopColor="#999" stopOpacity="0" />
          <stop offset="1" stopColor="#999" stopOpacity="0.700" />
        </linearGradient>
        <linearGradient id="collar" gradientUnits="userSpaceOnUse" x1="885" y1="290" x2="1060" y2="370">
          <stop offset="0" stopColor="#000" />
          <stop offset="0.200" stopColor="#555" />
          <stop offset="0.500" stopColor="#c4c4c4" />
          <stop offset="0.800" stopColor="#f0f0f0" />
        </linearGradient>
        <linearGradient id="lip" gradientUnits="userSpaceOnUse" x1="990" y1="590" x2="1035" y2="605">
          <stop offset="0" stopColor="#eee" />
          <stop offset="1" stopColor="#888" />
        </linearGradient>
        <linearGradient id="bed" gradientUnits="userSpaceOnUse" x1="230" y1="930" x2="290" y2="1035">
          <stop offset="0" stopColor="#8a8a8a" />
          <stop offset="0.500" stopColor="#555" />
          <stop offset="1" stopColor="#777" />
        </linearGradient>
        <clipPath id="wallR">
          <path d="M1496 470 L1493 510 L1430 785 C1425 810 1418 820 1405 850 L1180 1360 C1170 1385 1160 1410 1145 1435 C1110 1490 1060 1522 985 1522 C950 1520 922 1514 905 1503 L911 1270 L1200 1150 L1440 560 Z" />
        </clipPath>
      </defs>

      {/* right side wall */}
      <g clipPath="url(#wallR)">
        <path d="M900 400 H1500 V1530 H900 Z" fill="#000" />
        <path d="M900 1250 H1110 V1480 C1070 1520 960 1520 900 1495 Z" fill="url(#legR)" />
      </g>

      {/* bore and inner left leg */}
      <path d="M80 837 L366 369 L417 387 L757 400 L998 485 C1080 560 1129 650 1129 745 C1129 810 1110 880 1055 942 C1000 840 880 770 750 770 C600 770 480 850 430 935 C350 1080 320 1150 285 1195 C262 1225 240 1230 217 1222 L142 960 Z" fill="url(#bore)" />
      <path d="M42 875 C60 915 95 945 142 965 L217 1222 C180 1207 140 1180 120 1120 L75 980 Z" fill="url(#legL)" />

      {/* window at the bottom of the left slot */}
      <path d="M215 960 L275 893 L290 970 L328 990 C300 1023 260 1040 235 1033 C225 1010 216 985 215 960 Z" fill="url(#bed)" />
      <path d="M367 943 C372 880 420 790 500 735 C530 715 558 703 582 693 L584 730 C520 745 450 815 420 860 C400 890 385 922 367 943 Z" fill="#747474" />
      <path d="M540 713 L582 693 L584 730 Z" fill="#333" />
      <path d="M258 820 L287 965 C300 985 325 992 348 990 L322 815 Z" fill="url(#tipL)" />

      {/* right slot */}
      <path d="M1257 693 L1313 713 L1080 1231 L955 1183 L930 1225 L960 1080 L1130 960 Z" fill="#000" />
      <path d="M1257 693 L1313 713 L1228 905 Z" fill="#2d2d2d" />
      <path d="M1257 693 L1313 713 L1296 750 L1255 733 Z" fill="#4a4a4a" />
      <path d="M1045 1217 C1065 1212 1085 1195 1102 1175 L1080 1231 Z" fill="#808080" />
      <path d="M911 1055 L908 1213 C915 1222 925 1225 933 1226 L955 1183 H972 V1080 Z" fill="url(#tipR)" />

      {/* top face */}
      <path
        d="M32 800 C32 780 40 755 55 730 L410 170 C450 95 520 58 600 58 C640 58 665 66 690 75 L1370 308
           C1450 337 1497 395 1497 460 C1497 480 1493 500 1485 520 L1205 1150 C1170 1240 1090 1294 1000 1294
           C970 1294 940 1288 911 1277 L955 1183 L1080 1231 L1120 1142 L1313 713 L1257 693 C1230 750 1205 815 1185 865
           C1140 965 1075 1040 985 1088 C950 1103 911 1088 911 1055 C911 1030 935 1015 968 1022
           C1015 995 1035 970 1055 942 C1110 880 1129 810 1129 745 C1129 650 1080 560 998 492 L757 405
           C680 403 590 412 520 455 C440 500 375 565 345 630 C325 690 317 730 319 773 C335 780 338 793 337 800
           C333 825 315 838 292 837 C270 836 258 825 256 790 C250 690 260 640 290 595 C310 555 340 525 360 485
           L417 387 L366 369 L80 837 L193 882 L142 967 C90 945 32 890 32 800 Z"
        fill="#eee"
      />
      <path d="M366 369 L417 387 L380 447 Z" fill="#4c4c4c" />

      {/* bolt hole and nut pocket */}
      <path d="M866 208 L757 405 C720 420 703 440 703 475 C705 510 750 548 793 565 C850 572 910 592 962 627 C1000 640 1030 630 1032 600 C1035 570 1020 525 998 492 L1027 430 L1100 290 Z" fill="url(#bolt)" />
      <path d="M713 500 L740 470 H850 L793 565 C755 550 722 525 713 500 Z" fill="url(#haze)" />
      <path d="M972 629 L1025 550 C1034 570 1034 590 1032 600 C1028 632 1000 638 972 629 Z" fill="url(#lip)" />
      <path d="M866 208 L1100 290 L1027 430 L893 384 C865 350 846 290 850 240 Z" fill="#484848" />
      <path d="M850 240 C846 290 865 350 893 384 L870 380 C840 350 825 300 840 255 Z" fill="#1c1c1c" />
      <path d="M880 300 C880 270 895 252 917 250 L1073 335 L1045 395 C980 400 900 360 880 300 Z" fill="url(#collar)" />
      <path d="M917 250 C975 247 1050 290 1073 333 L1068 349 C1010 352 940 310 917 250 Z" fill="#a0a0a0" />
    </svg>
  );
}

/* ---------- page parts ---------- */

function TitleBar() {
  return (
    <header className="relative flex h-[22px] shrink-0 items-start border-b-2 border-[#2a3b52] bg-[linear-gradient(90deg,#7890a8_0,#8fa5bb_430px,#88a3bf_530px,#2f6394_570px,#417aae_900px,#4076a8_955px,#3c4c5b_975px,#42505f_100%)] pl-px pr-0.5">
      {/* what shines through the glass */}
      <div className="absolute bottom-0 left-[970px] flex h-2 gap-5 opacity-60 blur-[3px]" aria-hidden="true">
        <span className="-mt-1 w-6 bg-[#5585ad]" />
        <span className="w-5 bg-[#5d7085]" />
        <span className="w-6 bg-[#5d7085]" />
        <span className="w-8 bg-[#5d7085]" />
        <span className="w-7 bg-[#5d7085]" />
        <span className="w-6 bg-[#5d7085]" />
        <span className="w-8 bg-[#5d7085]" />
        <span className="w-6 bg-[#5d7085]" />
        <span className="w-7 bg-[#5d7085]" />
        <span className="w-10 bg-[#5d7085]" />
        <span className="w-6 bg-[#5d7085]" />
      </div>
      <div className="absolute bottom-0 left-[704px] h-3 w-7 bg-[#8fb9c9] blur-[4px]" aria-hidden="true" />
      <svg viewBox="0 0 16 16" className="mt-[3px] size-4 bg-black">
        <path d="M1 4 L4 7 L7 8 L8 3 L10 7 L14 5 L13 10 L9 14 L6 12 L2 9 Z" fill="#e5e5e5" />
        <path d="M6 9 L10 11" stroke="#333" />
      </svg>
      <h1 className="ml-1 mt-[3px] rounded-full bg-white/45 pr-1 font-[Roboto,sans-serif] text-xs leading-4 shadow-[0_0_8px_5px_rgba(255,255,255,0.45)]">
        14.01.28_Prueba 3D para presupuesto (5335 KB) - Rhinoceros (Commercial) (64-bit) - [Perspective]
      </h1>
      <div className="ml-auto flex h-[18px] overflow-hidden rounded-b border border-t-0 border-[#222b33] text-white">
        <button type="button" aria-label="Minimize" className="grid w-7 place-items-center border-r border-[#333d46] bg-gradient-to-b from-[#a7afb6] via-[#6b757e] to-[#7d8790]">
          <span className="mt-1 h-1 w-3 border border-[#444] bg-white" />
        </button>
        <button type="button" aria-label="Restore" className="grid w-[27px] place-items-center border-r border-[#333d46] bg-gradient-to-b from-[#a7afb6] via-[#6b757e] to-[#7d8790]">
          <svg viewBox="0 0 12 12" className="size-3" fill="none" stroke="#fff" strokeWidth="1.500"><path d="M4 3 V1 H11 V9 H9 M2 4 H8 V11 H2 Z M5 6 V9" /></svg>
        </button>
        <button type="button" aria-label="Close" className="grid w-[46px] place-items-center bg-gradient-to-b from-[#e0a79b] via-[#c5402a] to-[#d0563f]">
          <svg viewBox="0 0 12 12" className="size-3"><path d="M2 2 L10 10 M10 2 L2 10" stroke="#fff" strokeWidth="3" /></svg>
        </button>
      </div>
    </header>
  );
}

function CommandArea() {
  return (
    <section className="shrink-0 border-b border-[#c3c5cd] bg-[#e3e4ea] pb-[3px] pl-1.5 pr-0.5 pt-1 text-xs">
      <div className="flex h-7 bg-white">
        <p className="flex-1 leading-4">Creating meshes... Press Esc to cancel</p>
        <div className="flex w-4 flex-col items-center justify-around bg-[#f0f0f0]">
          <svg viewBox="0 0 6 3" className="h-[3px] w-1.5"><path d="M3 0 L6 3 H0 Z" /></svg>
          <svg viewBox="0 0 6 3" className="h-[3px] w-1.5"><path d="M3 3 L6 0 H0 Z" /></svg>
        </div>
      </div>
      <div className="flex h-[19px] items-start border-t border-[#9a9ba3] bg-white">
        <label htmlFor="command" className="font-bold leading-4">Command:</label>
        <input id="command" type="text" className="mx-1 h-4 flex-1 outline-none" />
        <div className="mt-px flex h-4 w-3.5 flex-col items-center justify-around border border-[#a9aab8] text-[#5a5f9e]">
          <svg viewBox="0 0 6 3" className="h-[3px] w-1.5" fill="currentColor"><path d="M3 0 L6 3 H0 Z" /></svg>
          <span className="h-px w-full bg-[#a9aab8]" />
          <svg viewBox="0 0 6 3" className="h-[3px] w-1.5" fill="currentColor"><path d="M3 3 L6 0 H0 Z" /></svg>
        </div>
      </div>
    </section>
  );
}

function ToolBar() {
  return (
    <section className="shrink-0">
      <nav className="flex h-[19px] items-end border-b border-[#9fa1ac] bg-[#e0e3ec] pl-[7px] text-[11px]">
        {toolTabs.map((tab, i) => (
          <button
            key={tab}
            type="button"
            className={clsx(
              'relative h-[15px] pl-[9px] pr-2 leading-[17px]',
              'before:absolute before:inset-y-0 before:left-0 before:w-1/2 before:origin-bottom-left before:-skew-x-[20deg] before:border-l before:border-t before:border-[#a9adbb]',
              'after:absolute after:inset-y-0 after:right-0 after:w-1/2 after:rounded-tr after:border-r after:border-t after:border-[#a9adbb]',
              i === 0 ? '-mb-px h-4 before:bg-[#fbfbfd] after:bg-[#fbfbfd]' : 'before:bg-[#d8deed] after:bg-[#d8deed]',
            )}
          >
            <span className="relative z-10">{tab}</span>
          </button>
        ))}
        <CogOutline className="ml-auto mr-0.5 size-4 text-[#8b8d93]" />
      </nav>
      <div className="flex h-[38px] items-start bg-gradient-to-b from-[#f7f7fa] to-[#dfe2eb] pl-1.5 pt-px">
        {standardTools.map((t) => <Tool key={t} name={t} />)}
      </div>
    </section>
  );
}

function Viewport() {
  return (
    <main className="relative min-h-0 flex-1 overflow-hidden border-l-2 border-[#979797] bg-[#a0a0a0]">
      <div className="-ml-0.5 flex h-[19px] w-[88px] items-center bg-[#8aa5c8] pl-[9px] font-[Roboto,sans-serif] text-xs">
        <span className="flex-1 text-[#14243a]">Perspective</span>
        <svg viewBox="0 0 12 16" className="mr-px h-4 w-3"><path d="M1 1 V15" stroke="#000" /><path d="M3 6 H11 L7 10 Z" /></svg>
      </div>
      <Model />
      <Palette
        title="Transform"
        tools={transformTools}
        className="left-6 top-[44px] h-[164px]"
        icon={<><path d="M5 11 L11 5" stroke="#888" /><rect x="1.500" y="9.500" width="5" height="5" fill="#eee" stroke="#99a" /><rect x="9.500" y="1.500" width="5" height="5" fill="#9aaee6" stroke="#88a" /></>}
      />
      <Palette
        title="Curve Tools"
        tools={curveTools}
        className="left-[224px] top-6 h-[194px]"
        icon={<><path d="M4 8 H13" stroke="#333" strokeDasharray="2 1" /><rect x="0.500" y="6.500" width="3" height="3" fill="#fff" stroke="#111" /></>}
      />
      <svg viewBox="0 0 44 30" className="absolute bottom-8 left-2 h-[30px] w-11 text-[#4f4f4f]" fill="none" stroke="currentColor">
        <path d="M2 14 L27 25 L39 2 M27 25 V9" />
        <text x="1" y="17" fontSize="13" fill="currentColor" strokeWidth="0.500" fontFamily="Liberation Sans, sans-serif">y</text>
        <text x="29" y="13" fontSize="13" fill="currentColor" stroke="none" fontFamily="Liberation Sans, sans-serif">z</text>
      </svg>
    </main>
  );
}

function ViewTabs() {
  const base = 'h-[21px] border-b border-r border-[#a3aac0] leading-[22px] pl-[11px] pr-[7px] rounded-br-sm [clip-path:polygon(0_0,100%_0,100%_100%,7px_100%,0_11px)]';
  return (
    <nav className="flex h-[27px] shrink-0 font-['Open_Sans',sans-serif] text-[11px]">
      <button type="button" className={clsx(base, 'bg-white')}>Perspective</button>
      {['Top', 'Front', 'Right'].map((v) => (
        <button key={v} type="button" className={clsx(base, 'bg-[#d5daea]')}>{v}</button>
      ))}
      <button type="button" aria-label="New viewport" className={clsx(base, 'bg-[#e3e6ee]')}>
        <svg viewBox="0 0 12 12" className="size-3"><path d="M5 2 H7 V5 H10 V7 H7 V10 H5 V7 H2 V5 H5 Z" fill="#fff" stroke="#666" /></svg>
      </button>
    </nav>
  );
}

const panelTabs: { name: string; icon: ReactNode; w: string }[] = [
  { name: 'Properties', w: 'w-[81px]', icon: <svg viewBox="4 4 20 20" className="size-4">{icons.wheel}</svg> },
  { name: 'Layers', w: 'w-[65px]', icon: <svg viewBox="4 4 20 21" className="size-4">{icons.layers}</svg> },
  {
    name: 'Display',
    w: 'w-[68px]',
    icon: <svg viewBox="0 0 16 16" className="size-4"><rect x="1" y="1" width="14" height="11" rx="1" fill="#555" stroke="#111" /><rect x="3" y="3" width="10" height="7" fill="#8d9094" /><path d="M4 15 H12 L11 12 H5 Z" fill="#333" /></svg>,
  },
  {
    name: 'Help',
    w: 'w-[62px]',
    icon: <svg viewBox="0 0 16 16" className="size-4"><rect x="1.500" y="1.500" width="13" height="13" fill="#4868bd" stroke="#8790a8" /><path d="M1 3 H15" stroke="#dfe4f0" strokeWidth="2" /><text x="8" y="13" textAnchor="middle" fontSize="10" fontWeight="700" fill="#fff" fontFamily="Liberation Sans, sans-serif">?</text></svg>,
  },
];

function SidePanel() {
  return (
    <aside className="flex w-[303px] shrink-0 flex-col pb-[9px] pl-[7px] pr-px text-[11px]">
      <div className="mt-[3px] h-[3px] border-y border-[#bcc0cf]" />
      <nav className="mt-[2px] flex h-[22px] items-end">
        {panelTabs.map(({ name, icon, w }) => (
          <button
            key={name}
            type="button"
            className={clsx(
              'relative flex h-[21px] items-center pl-[5px]',
              w,
              'before:absolute before:inset-y-0 before:left-0 before:w-1/2 before:rounded-tl before:border-l before:border-t before:border-[#a5a9ba]',
              'after:absolute after:inset-y-0 after:right-0 after:w-1/2 after:origin-bottom-right after:skew-x-[30deg] after:border-r after:border-t after:border-[#a5a9ba]',
              name === 'Display' ? 'before:bg-white after:bg-white' : 'before:bg-[#d8deed] after:bg-[#d8deed]',
            )}
          >
            <span className="relative z-10 flex items-center gap-0.5">{icon}{name}</span>
          </button>
        ))}
        <CogOutline className="mb-px ml-auto size-4 text-[#8b8d93]" />
      </nav>
      <div className="flex min-h-0 flex-1 flex-col border border-[#a5a9ba] bg-white pb-px pl-0.5 pr-0.5 pt-px">
        <table className="w-full table-fixed border-separate border-spacing-0">
          <colgroup>
            <col className="w-[145px]" />
            <col />
          </colgroup>
          <tbody>
            <tr>
              <th scope="row" className="h-[19px] border-b border-r border-[#dfe1ea] pl-1 text-left font-normal leading-[18px]">Active viewport</th>
              <td className="border-b border-[#dfe1ea] pl-1 leading-[18px]">Perspective</td>
            </tr>
            <tr>
              <th scope="row" className="h-[19px] border-b border-r border-[#dfe1ea] pl-1 text-left font-normal leading-[18px]">Display mode</th>
              <td className="border-b border-[#dfe1ea]"><DropDown label="Display mode" value="Rendered" /></td>
            </tr>
          </tbody>
          {settings.map((group) => (
            <tbody key={group.title}>
              <tr>
                <th colSpan={2} scope="colgroup" className="h-[23px] border-b border-[#dfe1ea] bg-[#f6f6fa] pl-1 text-left font-normal leading-[22px]">{group.title}</th>
              </tr>
              {group.rows.map(([name, value]) => {
                const id = name.toLowerCase().replace(/\W+/g, '-');
                return (
                  <tr key={name}>
                    <th scope="row" className="h-[19px] border-b border-r border-[#dfe1ea] bg-[linear-gradient(90deg,#f6f6fa_8px,#fff_8px)] pl-[13px] text-left font-normal leading-[18px]">
                      {typeof value === 'string' ? name : <label htmlFor={id}>{name}</label>}
                    </th>
                    <td className="border-b border-[#dfe1ea]">
                      {typeof value === 'string' ? <DropDown label={name} value={value} /> : <div className="pl-[5px]"><Check id={id} checked={value} /></div>}
                    </td>
                  </tr>
                );
              })}
            </tbody>
          ))}
        </table>
        <button type="button" className="mt-auto h-[21px] rounded-[3px] border border-[#2f7fa8] bg-gradient-to-b from-[#f2f2f2] to-[#cfd2d5] shadow-[inset_0_0_0_1px_#55c5ec]">
          Edit "Rendered" settings...
        </button>
      </div>
    </aside>
  );
}

function OsnapBar() {
  return (
    <section className="flex h-[23px] shrink-0 items-center gap-1.5 pl-[3px] text-[11px]">
      <span className="h-[19px] w-0.5 border-x border-[#b6bac9]" />
      {osnaps.map(([name, on]) => {
        const id = `osnap-${name.toLowerCase()}`;
        return (
          <div key={name} className="flex items-center gap-[5px]">
            <Check id={id} checked={on} />
            <label htmlFor={id}>{name}</label>
          </div>
        );
      })}
      {['Project', 'Disable'].map((name) => (
        <button key={name} type="button" className="flex items-center gap-1">
          <span className="h-3.5 w-[15px] rounded-[3px] border border-[#777] bg-gradient-to-b from-[#f5f5f5] to-[#cfcfcf]" />
          {name}
        </button>
      ))}
    </section>
  );
}

function StatusBar() {
  return (
    <footer className="flex h-5 shrink-0 border-b-2 border-t border-b-[#33507a] border-t-[#9fa2b5] text-xs leading-[21px]">
      {statusCells.map(({ text, w, on, swatch }) => (
        <button
          key={text}
          type="button"
          className={clsx(
            'flex items-center whitespace-nowrap border-r border-[#a9acbd] pt-0.5',
            w,
            swatch ? 'justify-start gap-0.5 pl-1' : 'justify-center',
            on && 'bg-[#e2f3fd] font-bold',
          )}
        >
          {swatch && <span className="size-[13px] border border-[#7a1010] bg-[#f00]" />}
          {text}
        </button>
      ))}
      <p className="mr-[7px] flex-1 border-r border-[#a9acbd] pl-[3px]">Memory use: 354 MB</p>
    </footer>
  );
}

export default function App() {
  return (
    <div className="flex h-screen flex-col overflow-hidden bg-[#e0e3ec] font-['Liberation_Sans',Arial,sans-serif] text-black">
      <svg className="absolute size-0" aria-hidden="true">
        <defs>
          <linearGradient id="blue" x1="0" y1="0" x2="1" y2="1">
            <stop offset="0" stopColor="#bccbf7" />
            <stop offset="1" stopColor="#5478d2" />
          </linearGradient>
          <linearGradient id="metal" x1="0" y1="0" x2="1" y2="1">
            <stop offset="0" stopColor="#f5f5f5" />
            <stop offset="1" stopColor="#5d5d5d" />
          </linearGradient>
          <linearGradient id="fire" x1="0" y1="0" x2="1" y2="1">
            <stop offset="0" stopColor="#ffe27a" />
            <stop offset="1" stopColor="#f48a12" />
          </linearGradient>
          <radialGradient id="ball" cx="0.350" cy="0.300" r="0.800">
            <stop offset="0" stopColor="#4f7df0" />
            <stop offset="1" stopColor="#06158a" />
          </radialGradient>
        </defs>
      </svg>

      <TitleBar />
      <nav className="flex h-[19px] shrink-0 items-center gap-[13px] border-b border-[#a9adbe] bg-gradient-to-b from-white via-[#d8dfef] to-[#e2e5f2] pl-2 pt-0.5 font-[Roboto,sans-serif] text-xs">
        {menus.map((m) => <button key={m} type="button">{m}</button>)}
      </nav>
      <CommandArea />
      <ToolBar />

      <div className="flex min-h-0 flex-1">
        <aside className="w-16 shrink-0 pl-px">
          <div className="ml-0.5 mr-[6px] mt-[3px] h-[3px] border-y border-[#bcc0cf]" />
          <div className="mt-px grid grid-cols-[28px_28px]">
            {sideTools.map((t) => <Tool key={t} name={t} />)}
          </div>
        </aside>
        <div className="flex min-w-0 flex-1 flex-col">
          <Viewport />
          <ViewTabs />
        </div>
        <SidePanel />
      </div>

      <OsnapBar />
      <StatusBar />
    </div>
  );
}
